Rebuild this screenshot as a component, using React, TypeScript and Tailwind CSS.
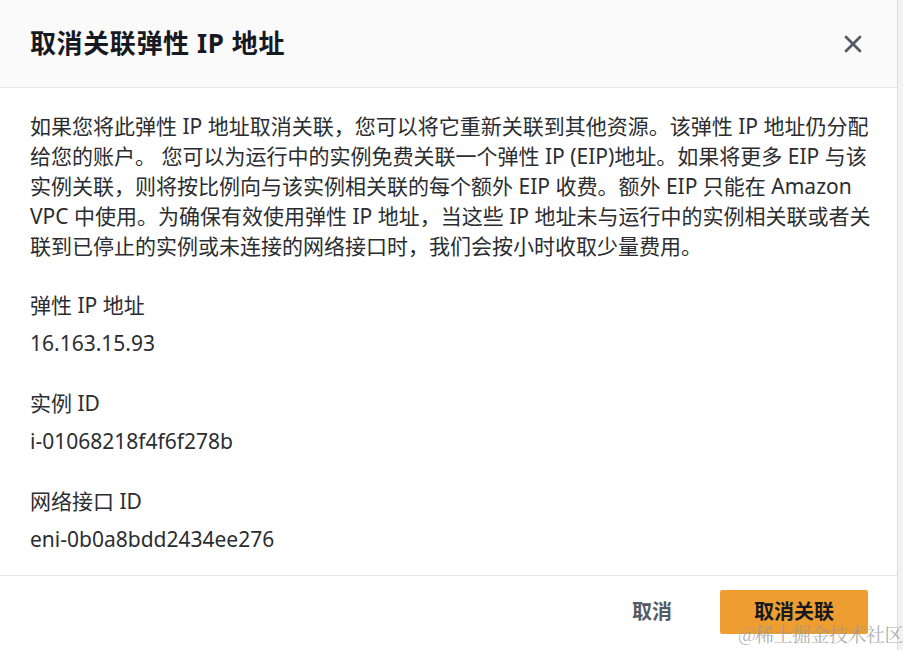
import { X } from 'lucide-react'

const font = { fontFamily: '"Noto Sans", "Noto Sans CJK SC", sans-serif' }

const paragraph = [
  '如果您将此弹性 IP 地址取消关联，您可以将它重新关联到其他资源。该弹性 IP 地址仍分配',
  '给您的账户。 您可以为运行中的实例免费关联一个弹性 IP (EIP)地址。如果将更多 EIP 与该',
  '实例关联，则将按比例向与该实例相关联的每个额外 EIP 收费。额外 EIP 只能在 Amazon',
  'VPC 中使用。为确保有效使用弹性 IP 地址，当这些 IP 地址未与运行中的实例相关联或者关',
  '联到已停止的实例或未连接的网络接口时，我们会按小时收取少量费用。',
]

const fields = [
  { label: '弹性 IP 地址', value: '16.163.15.93' },
  { label: '实例 ID', value: 'i-01068218f4f6f278b' },
  { label: '网络接口 ID', value: 'eni-0b0a8bdd2434ee276' },
]

export default function App() {
  return (
    <div className="relative w-[903px] h-[650px] bg-[#f2f2f2] overflow-hidden" style={font}>
      <div className="w-[898px] h-[650px] bg-white border-r border-[#dcdcdc] flex flex-col">
        <div className="h-[88px] bg-[#fafafa] border-b border-[#e6e6e6] pl-[30px] pr-[30px] flex items-center justify-between">
          <h1 className="text-[26px] font-bold text-[#16191f] tracking-[0.6px]">取消关联弹性 IP 地址</h1>
          <X className="w-[28px] h-[28px] text-[#545b64]" strokeWidth={2.4} />
        </div>

        <div className="flex-1 px-[30px] pt-[23px] text-[21px] leading-[30px] text-[#2b2d30]">
          <div>
            {paragraph.map((line) => (
              <div key={line} className="whitespace-nowrap">{line}</div>
            ))}
          </div>
          <div className="mt-[29px] flex flex-col gap-[30px]">
            {fields.map((f) => (
              <div key={f.label} className="flex flex-col gap-[8px]">
                <div>{f.label}</div>
                <div>{f.value}</div>
              </div>
            ))}
          </div>
        </div>

        <div className="h-[75px] border-t border-[#e6e6e6] flex items-start justify-end pt-[14px] pr-[29px] gap-[48px]">
          <button className="h-[44px] text-[20px] font-bold text-[#545b64]">取消</button>
          <button className="w-[148px] h-[44px] rounded-[2px] bg-[#ee9d30] text-[20px] font-bold text-[#16191f]">
            取消关联
          </button>
        </div>
      </div>

      <div
        className="absolute right-[0px] bottom-[2px] text-[19px] text-[#9a9a9a]/80 tracking-[-0.5px]"
        style={{ fontFamily: '"Noto Serif CJK SC", "Liberation Serif", "Noto Sans CJK SC", serif' }}
      >
        @稀土掘金技术社区
      </div>
    </div>
  )
}
